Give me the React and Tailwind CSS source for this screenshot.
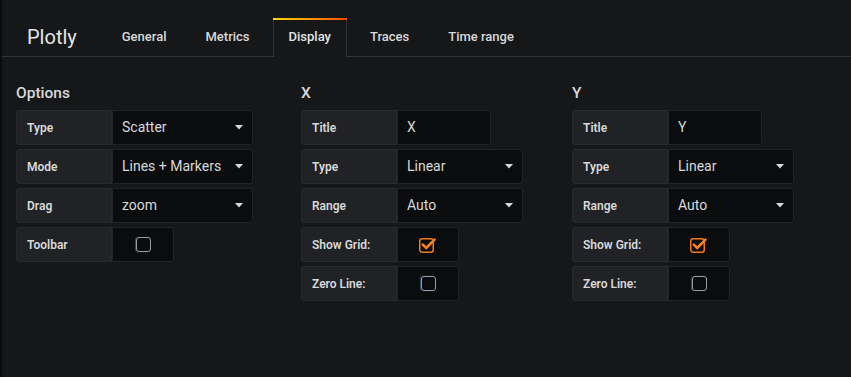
import React from 'react';

const tabs = ['General', 'Metrics', 'Display', 'Traces', 'Time range'];

function Caret() {
  return (
    <svg width="8" height="5" viewBox="0 0 8 5" className="shrink-0">
      <polygon points="0,0 8,0 4,4.5" fill="#d8d9da" />
    </svg>
  );
}

function Checkbox({ checked }) {
  if (checked) {
    return (
      <svg width="20" height="18" viewBox="0 0 20 18">
        <rect x="1.75" y="2.75" width="13.5" height="13.5" rx="2.5" fill="none" stroke="#f0781e" strokeWidth="1.5" />
        <path d="M4.8 8.6 L8.2 12 L16.5 3.6" fill="none" stroke="#f5821f" strokeWidth="2.6" strokeLinecap="round" strokeLinejoin="round" />
      </svg>
    );
  }
  return <div className="h-[15px] w-[15px] rounded-[3px] border-[1.5px] border-[#9a9ca1] shadow-[-1px_0_1px_rgba(87,149,242,0.45)]" />;
}

function Label({ children }) {
  return (
    <div className="flex h-[35px] w-[96px] shrink-0 items-center rounded-l-[3px] border border-[#292a2e] bg-[#212226] pl-[10px] text-[12px] font-semibold text-[#d8d9da]">
      {children}
    </div>
  );
}

function Field({ label, value, width, kind }) {
  return (
    <div className="flex">
      <Label>{label}</Label>
      {kind === 'check' ? (
        <div className="flex h-[35px] w-[62px] items-center justify-center rounded-r-[3px] border border-[#222327] bg-[#0b0c0e]">
          <Checkbox checked={value} />
        </div>
      ) : (
        <div
          className={`flex h-[35px] items-center justify-between rounded-r-[3px] border border-[#222327] bg-[#0b0c0e] pl-[9px] pr-[9px] text-[14px] text-[#d8d9da] ${width}`}
        >
          <span>{value}</span>
          {kind === 'select' && <Caret />}
        </div>
      )}
    </div>
  );
}

function Section({ title, className = '', children }) {
  return (
    <div className={`flex flex-col ${className}`}>
      <h3 className="mb-[7px] h-[20px] text-[15.5px] font-medium leading-[20px] text-[#d8d9da]">{title}</h3>
      <div className="flex flex-col gap-[4px]">{children}</div>
    </div>
  );
}

export default function App() {
  return (
    <div className="h-[377px] w-[851px] overflow-hidden bg-[#161719] font-['Roboto',sans-serif] text-[#d8d9da] shadow-[inset_3px_0_3px_-2px_rgba(0,0,0,0.9)]">
      <div className="ml-[2px] flex items-end border-b border-[#333438] pt-[18px]">
        <div className="ml-[25px] mr-[29px] flex h-[38px] items-center text-[20px] text-[#e3e4e5]">Plotly</div>
        {tabs.map((tab) =>
          tab === 'Display' ? (
            <div
              key={tab}
              className="relative -mb-px mr-[7px] flex h-[39px] items-center border-x border-[#333438] bg-[#161719] px-[15px] pb-px text-[13px] font-medium text-[#e3e4e5] before:absolute before:-left-px before:-right-px before:top-0 before:h-[2px] before:bg-gradient-to-r before:from-[#ffd500] before:to-[#ff4400] before:content-['']"
            >
              {tab}
            </div>
          ) : (
            <div key={tab} className="mr-[7px] flex h-[38px] items-center px-[16px] text-[13px] font-medium text-[#d8d9da]">
              {tab}
            </div>
          )
        )}
      </div>

      <div className="flex gap-[48px] pl-[16px] pt-[26px]">
        <Section title="Options">
          <Field label="Type" value="Scatter" width="w-[141px]" kind="select" />
          <Field label="Mode" value="Lines + Markers" width="w-[141px]" kind="select" />
          <Field label="Drag" value="zoom" width="w-[141px]" kind="select" />
          <Field label="Toolbar" value={false} kind="check" />
        </Section>
        <Section title="X">
          <Field label="Title" value="X" width="w-[94px]" kind="input" />
          <Field label="Type" value="Linear" width="w-[126px]" kind="select" />
          <Field label="Range" value="Auto" width="w-[126px]" kind="select" />
          <Field label="Show Grid:" value={true} kind="check" />
          <Field label="Zero Line:" value={false} kind="check" />
        </Section>
        <Section title="Y" className="ml-px">
          <Field label="Title" value="Y" width="w-[94px]" kind="input" />
          <Field label="Type" value="Linear" width="w-[126px]" kind="select" />
          <Field label="Range" value="Auto" width="w-[126px]" kind="select" />
          <Field label="Show Grid:" value={true} kind="check" />
          <Field label="Zero Line:" value={false} kind="check" />
        </Section>
      </div>
    </div>
  );
}
